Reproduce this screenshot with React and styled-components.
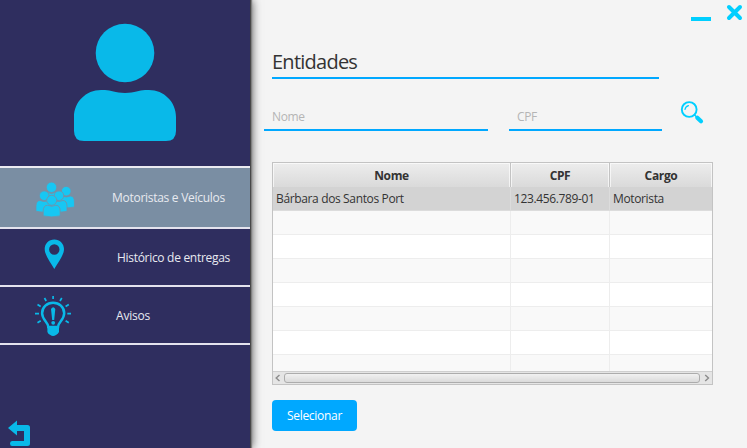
import React from "react";
import styled, { createGlobalStyle } from "styled-components";

const GlobalStyle = createGlobalStyle`
  * { box-sizing: border-box; }
  body { margin: 0; background: #f4f4f4; overflow: hidden; }
  button, input { font: inherit; letter-spacing: inherit; }
`;

const Window = styled.div`
  display: flex;
  width: 747px;
  height: 448px;
  background: #f4f4f4;
  color: #333;
  font: 12px/16px "Open Sans", "Noto Sans", sans-serif;
  letter-spacing: -0.2px;
`;

const Sidebar = styled.aside`
  display: flex;
  flex-direction: column;
  flex: none;
  width: 250px;
  background: #2f2e5f;
  box-shadow: 1px 0 0 #484848, 2px 0 1px #808080, 2px 0 9px rgba(0, 0, 0, 0.65);
`;

const Profile = styled.div`
  height: 166px;
  padding: 23px 0 0 73px;
`;

const Menu = styled.nav`
  border-top: 2px solid #ebebf1;
`;

const MenuItem = styled.button`
  display: flex;
  align-items: center;
  width: 100%;
  height: ${(p) => p.$height}px;
  padding: 0;
  border: 0;
  border-bottom: 2px solid #e4e3ee;
  background: ${(p) => (p.$active ? "#7a8ea3" : "transparent")};
  color: #e8eaf0;
  text-align: left;
`;

const MenuIcon = styled.span`
  display: flex;
  width: ${(p) => p.$width}px;
  padding-left: 32px;
`;

const MenuLabel = styled.span`
  padding-top: ${(p) => p.$drop}px;
  letter-spacing: ${(p) => p.$spacing}px;
`;

const BackButton = styled.button`
  display: flex;
  margin-top: auto;
  padding: 0 0 2px 7px;
  border: 0;
  background: none;
`;

const Main = styled.main`
  flex: 1;
  padding-left: 22px;
`;

const WindowControls = styled.div`
  display: flex;
  justify-content: flex-end;
  gap: 15px;
  height: 48px;
  padding: 4px 4px 0 0;
`;

const Title = styled.h1`
  width: 387px;
  height: 31px;
  margin: 0;
  border-bottom: 2px solid #00a8ff;
  font-size: 20px;
  font-weight: 400;
  line-height: 28px;
  letter-spacing: -0.75px;
`;

const SearchBar = styled.form`
  display: flex;
  height: 83px;
  margin-left: -8px;
  padding-top: 20px;
`;

const Field = styled.input`
  width: ${(p) => p.$width}px;
  height: 32px;
  margin-right: ${(p) => p.$gap}px;
  padding: 4px 8px 0;
  border: 0;
  border-bottom: 2px solid #00a8ff;
  outline: 0;
  background: transparent;
  letter-spacing: -0.35px;
  &::placeholder { color: #b5b5b5; opacity: 1; }
`;

const SearchButton = styled.button`
  display: flex;
  height: 26px;
  padding: 0;
  border: 0;
  background: none;
`;

const Table = styled.section`
  display: flex;
  flex-direction: column;
  width: 441px;
  height: 223px;
  border: 1px solid #c3c3c3;
  background: #fff;
`;

const columns = "238px 99px 102px";

const HeaderRow = styled.div`
  display: grid;
  grid-template-columns: ${columns};
  flex: none;
  height: 24px;
  border-bottom: 1px solid #c3c3c3;
`;

const HeaderCell = styled.div`
  border-right: 1px solid #c3c3c3;
  background: linear-gradient(#ededed, #d9d9d9);
  box-shadow: inset 0 0 0 1px rgba(255, 255, 255, 0.65);
  font-weight: 700;
  line-height: 25px;
  letter-spacing: -0.35px;
  text-align: center;
  &:last-child { border-right: 0; }
`;

const Rows = styled.div`
  height: 184px;
  overflow: hidden;
`;

const Row = styled.div`
  display: grid;
  grid-template-columns: ${columns};
  height: 24px;
  background: ${(p) => (p.$selected ? "#d3d3d3" : p.$shaded ? "#f9f9f9" : "#fff")};
`;

const Cell = styled.div`
  padding-left: 3px;
  border-right: 1px solid ${(p) => (p.$selected ? "#dcdcdc" : "#ededed")};
  border-bottom: 1px solid ${(p) => (p.$selected ? "#dcdcdc" : "#ededed")};
  line-height: 23px;
  letter-spacing: -0.36px;
  white-space: nowrap;
  &:last-child { border-right: 0; }
`;

const ScrollBar = styled.div`
  display: flex;
  align-items: center;
  height: 13px;
  padding: 0 2px;
  border-top: 1px solid #cfcfcf;
  background: #e5e5e5;
`;

const Thumb = styled.div`
  width: 417px;
  height: 10px;
  margin: 0 4px 0 3px;
  border: 1px solid #acacac;
  border-radius: 3px;
  background: linear-gradient(#f1f1f1, #dadada);
`;

const SelectButton = styled.button`
  display: block;
  width: 85px;
  height: 31px;
  margin-top: 15px;
  padding: 0;
  border: 0;
  border-radius: 4px;
  background: #00a8ff;
  color: #fff;
  letter-spacing: -0.3px;
`;

const UserIcon = () => (
  <svg width="104" height="119" viewBox="73 23 104 119" fill="#09b9e9">
    <circle cx="125" cy="53" r="29.3" />
    <path d="M74 117C74 102 86 90 101 90H105C111 90 115 93 125 93S139 90 145 90H149C164 90 176 102 176 117V131Q176 141 166 141H84Q74 141 74 131Z" />
  </svg>
);

const Person = ({ x, y, r, w, h }) => (
  <g stroke="#7a8ea3" strokeWidth="0.8">
    <path d={`M${x - w / 2} ${y + r + h}V${y + r + 6}Q${x - w / 2} ${y + r} ${x - w / 4} ${y + r}Q${x} ${y + r + 2} ${x + w / 4} ${y + r}Q${x + w / 2} ${y + r} ${x + w / 2} ${y + r + 6}V${y + r + h}Q${x} ${y + r + h + 2} ${x - w / 2} ${y + r + h}Z`} />
    <circle cx={x} cy={y} r={r} />
  </g>
);

const PeopleIcon = () => (
  <svg width="48" height="44" viewBox="32 175.5 48 44" fill="#17c7f3">
    <Person x={51.5} y={186.8} r={5.2} w={12} h={9} />
    <Person x={66.2} y={190.7} r={4.8} w={16.5} h={11} />
    <Person x={44.2} y={195.2} r={4.8} w={16.5} h={10.8} />
    <Person x={59} y={195.2} r={4.8} w={16} h={10.8} />
    <Person x={51.7} y={199.8} r={5} w={17} h={10.6} />
  </svg>
);

const PinIcon = () => (
  <svg width="48" height="40" viewBox="32 236.5 48 40">
    <path fill="#09b9e9" fillRule="evenodd" d="M54.3 239C48.8 239 44.7 243.2 44.7 248.6C44.7 254.5 50 261 54.3 268.5C58.6 261 64 254.5 64 248.6C64 243.2 59.8 239 54.3 239ZM54.3 243.8A5.2 5.2 0 1 1 54.3 254.2A5.2 5.2 0 0 1 54.3 243.8Z" />
  </svg>
);

const BulbIcon = () => (
  <svg width="48" height="44" viewBox="32 293 48 44" fill="none" stroke="#09b9e9">
    <path strokeWidth="2.5" d="M48.3 327C48.3 322 42.1 320 42.1 313.3C42.1 307 47.2 302.8 53.1 302.8S64.2 307 64.2 313.3C64.2 320 58 322 58 327Z" />
    <path fill="#09b9e9" stroke="none" d="M47.4 326.5H59V332Q58 334 56 335Q53 337 50.3 335Q48 334 47.4 332ZM51 309Q53.2 305.5 55.3 309L54.2 320H52.2Z" />
    <circle cx="53.2" cy="322.8" r="1.9" fill="#09b9e9" stroke="none" />
    <path strokeWidth="1.7" d="M53.1 296V299M44.5 298L46.2 301M61.8 298L60 301M37.5 304.5L40.7 306.5M68.8 304.5L65.6 306.5M35 313.7H39M71 313.7H67.3M37.5 322.8L40.7 320.8M68.8 322.8L65.6 320.8" />
  </svg>
);

const BackIcon = () => (
  <svg width="24" height="27" viewBox="7 419 24 27" fill="#09b9e9">
    <path d="M8 428L17 420.5V425H27.5Q30 425 30 427.5V443.5Q30 446 27.5 446H12Q10 446 10 443.5T12 441H24V431H17V435.5Z" />
  </svg>
);

const MinimizeIcon = () => (
  <svg width="20" height="18" viewBox="0 0 20 18"><path fill="#00cfff" d="M0 13h20v4H0z" /></svg>
);

const CloseIcon = () => (
  <svg width="17" height="18" viewBox="0 0 17 18">
    <path d="M3 3L14 14M14 3L3 14" fill="none" stroke="#00cfff" strokeWidth="4" strokeLinecap="round" />
  </svg>
);

const SearchIcon = () => (
  <svg width="24" height="26" viewBox="680 98.5 24 26" fill="none" stroke="#00cfff" strokeLinecap="round">
    <circle cx="689.2" cy="109" r="7.4" strokeWidth="1.9" />
    <path d="M685 109Q685.5 106 688.5 105.2" strokeWidth="1.2" />
    <path d="M694.7 114.5L697 117" strokeWidth="1.3" />
    <path d="M697.3 117.2L701 120.8" strokeWidth="4.2" />
  </svg>
);

const Arrow = ({ right }) => (
  <svg width="6" height="8" viewBox="0 0 6 8">
    <path d={right ? "M1.2 1L4.5 4L1.2 7" : "M4.5 1L1.2 4L4.5 7"} fill="none" stroke="#8c8c8c" strokeWidth="1.4" />
  </svg>
);

const menuItems = [
  { label: "Motoristas e Veículos", Icon: PeopleIcon, width: 112, height: 61, spacing: -0.28, drop: 0, active: true },
  { label: "Histórico de entregas", Icon: PinIcon, width: 117, height: 58, spacing: -0.3, drop: 2 },
  { label: "Avisos", Icon: BulbIcon, width: 116, height: 58, spacing: -0.2, drop: 2 },
];

const rows = [
  ["Bárbara dos Santos Port", "123.456.789-01", "Motorista"],
  ...Array.from({ length: 7 }, () => ["", "", ""]),
];

export default function App() {
  return (
    <>
      <GlobalStyle />
      <Window>
        <Sidebar>
          <Profile><UserIcon /></Profile>
          <Menu>
            {menuItems.map(({ label, Icon, width, height, spacing, drop, active }) => (
              <MenuItem key={label} $height={height} $active={active}>
                <MenuIcon $width={width}><Icon /></MenuIcon>
                <MenuLabel $spacing={spacing} $drop={drop}>{label}</MenuLabel>
              </MenuItem>
            ))}
          </Menu>
          <BackButton aria-label="Voltar"><BackIcon /></BackButton>
        </Sidebar>
        <Main>
          <WindowControls><MinimizeIcon /><CloseIcon /></WindowControls>
          <Title>Entidades</Title>
          <SearchBar>
            <Field $width={224} $gap={21} placeholder="Nome" />
            <Field $width={153} $gap={18} placeholder="CPF" />
            <SearchButton type="button" aria-label="Buscar"><SearchIcon /></SearchButton>
          </SearchBar>
          <Table>
            <HeaderRow>
              <HeaderCell>Nome</HeaderCell>
              <HeaderCell>CPF</HeaderCell>
              <HeaderCell>Cargo</HeaderCell>
            </HeaderRow>
            <Rows>
              {rows.map((row, i) => (
                <Row key={i} $selected={i === 0} $shaded={i % 2 === 1}>
                  {row.map((text, j) => (
                    <Cell key={j} $selected={i === 0}>{text}</Cell>
                  ))}
                </Row>
              ))}
            </Rows>
            <ScrollBar><Arrow /><Thumb /><Arrow right /></ScrollBar>
          </Table>
          <SelectButton>Selecionar</SelectButton>
        </Main>
      </Window>
    </>
  );
}
